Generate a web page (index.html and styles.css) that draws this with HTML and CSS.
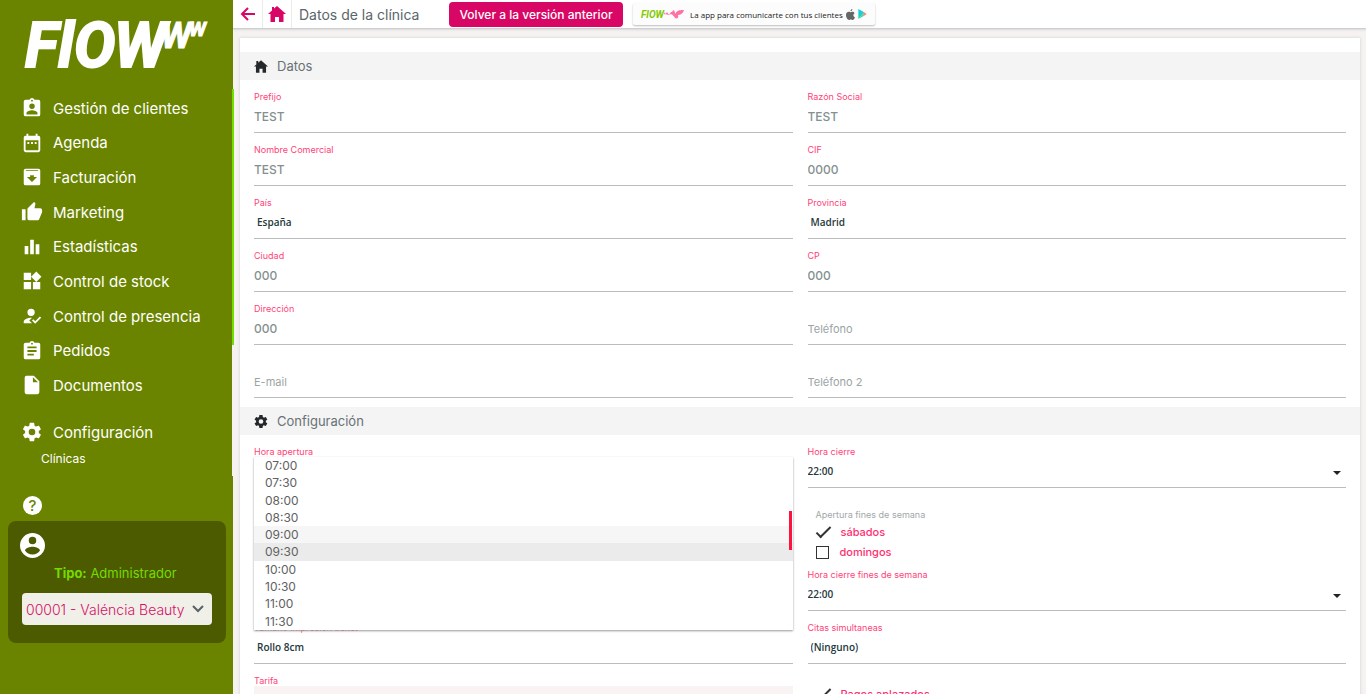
FILE: index.html
```html
<!DOCTYPE html>
<html lang="es">
<head>
    <meta charset="UTF-8">
    <meta name="viewport" content="width=device-width, initial-scale=1.0">
    <title>Datos de la clínica</title>
    <link rel="stylesheet" href="styles.css">
</head>
<body>
    <aside class="sidebar">
        <svg class="logo" viewBox="0 0 190 56" role="img" aria-label="Flowww">
            <text class="logo-text" x="3" y="50" font-size="62">FlO</text>
            <text class="logo-text" x="92" y="50" font-size="62">W</text>
            <text class="logo-text logo-medium" x="139" y="31" font-size="36">W</text>
            <text class="logo-text logo-small" x="167" y="19" font-size="20">W</text>
        </svg>

        <nav>
            <ul class="menu">
                <li><a href="#"><svg viewBox="0 0 24 24"><path d="M19 3h-4.200a3 3 0 0 0-5.600 0H5a2 2 0 0 0-2 2v14a2 2 0 0 0 2 2h14a2 2 0 0 0 2-2V5a2 2 0 0 0-2-2zm-7 0a1 1 0 1 1 0 2 1 1 0 0 1 0-2zm0 4a3 3 0 1 1 0 6 3 3 0 0 1 0-6zm6 12H6v-1.400c0-2 4-3.100 6-3.100s6 1.100 6 3.100z"/></svg>Gestión de clientes</a></li>
                <li><a href="#"><svg viewBox="0 0 24 24"><path d="M9 11H7v2h2zm4 0h-2v2h2zm4 0h-2v2h2zm2-7h-1V2h-2v2H8V2H6v2H5a2 2 0 0 0-2 2v14a2 2 0 0 0 2 2h14a2 2 0 0 0 2-2V6a2 2 0 0 0-2-2zm0 16H5V9h14z"/></svg>Agenda</a></li>
                <li><a href="#"><svg viewBox="0 0 24 24"><path d="M19 3H5a2 2 0 0 0-2 2v14a2 2 0 0 0 2 2h14a2 2 0 0 0 2-2V5a2 2 0 0 0-2-2zm-7 14.500L6.500 12H10v-2h4v2h3.500zM5 5.500l.5-.8h13l.5.8z"/></svg>Facturación</a></li>
                <li><a href="#"><svg viewBox="0 0 24 24"><path d="M1 21h4V9H1zm22-11a2 2 0 0 0-2-2h-6.300l1-4.600v-.3c0-.4-.2-.8-.4-1.100L14.200 1 7.600 7.600C7.200 8 7 8.500 7 9v10a2 2 0 0 0 2 2h9c.8 0 1.500-.5 1.800-1.200l3-7.100c.1-.2.2-.5.2-.7z"/></svg>Marketing</a></li>
                <li><a href="#"><svg viewBox="0 0 24 24"><path d="M4 11h4v9H4zm6-7h4v16h-4zm6 5h4v11h-4z"/></svg>Estadísticas</a></li>
                <li><a href="#"><svg viewBox="0 0 24 24"><path d="M13 13v8h8v-8zM3 21h8v-8H3zM3 3v8h8V3zm13.700-1.300L11 7.300l5.700 5.700 5.600-5.700z"/></svg>Control de stock</a></li>
                <li><a href="#"><svg viewBox="0 0 24 24"><path d="M11 12a4 4 0 1 0 0-8 4 4 0 0 0 0 8zm-8 6v2h9l-3-3 3-3-1-.1c-2.700 0-8 1.400-8 4.100zm12.500 2.500L12 17l1.400-1.400 2.100 2.100 5.100-5.200L22 14z"/></svg>Control de presencia</a></li>
                <li><a href="#"><svg viewBox="0 0 24 24"><path d="M19 3h-4.200a3 3 0 0 0-5.600 0H5a2 2 0 0 0-2 2v14a2 2 0 0 0 2 2h14a2 2 0 0 0 2-2V5a2 2 0 0 0-2-2zm-7 0a1 1 0 1 1 0 2 1 1 0 0 1 0-2zm2 14H7v-2h7zm3-4H7v-2h10zm0-4H7V7h10z"/></svg>Pedidos</a></li>
                <li><a href="#"><svg viewBox="0 0 24 24"><path d="M6 2a2 2 0 0 0-2 2v16a2 2 0 0 0 2 2h12a2 2 0 0 0 2-2V8l-6-6zm7 7V3.500L18.500 9z"/></svg>Documentos</a></li>
            </ul>
            <a class="menu-config" href="#"><svg viewBox="0 0 24 24"><path d="M19.400 13a7 7 0 0 0 0-2l2.100-1.600c.2-.2.300-.4.100-.6l-2-3.500c-.1-.2-.4-.3-.6-.2l-2.500 1a7 7 0 0 0-1.700-1l-.4-2.600c0-.3-.2-.5-.5-.5h-4c-.2 0-.4.200-.5.500L9 5.100a8 8 0 0 0-1.700 1l-2.400-1c-.3-.1-.5 0-.7.200l-2 3.500c-.1.200 0 .4.200.6L4.500 11a8 8 0 0 0 0 2l-2.100 1.600c-.2.200-.3.400-.2.600l2 3.500c.2.200.4.300.7.200l2.400-1a7 7 0 0 0 1.700 1l.4 2.600c.1.300.3.500.5.500h4c.3 0 .5-.2.500-.5l.4-2.600a7 7 0 0 0 1.700-1l2.500 1c.2.100.5 0 .6-.2l2-3.500c.2-.2.100-.4-.1-.6zM12 15.600a3.600 3.600 0 1 1 0-7.200 3.600 3.600 0 0 1 0 7.200z"/></svg>Configuración</a>
            <a class="submenu" href="#">Clínicas</a>
        </nav>

        <button class="help" aria-label="Ayuda">?</button>

        <div class="user-box">
            <svg class="avatar" viewBox="2 2 20 20"><path d="M12 2a10 10 0 1 0 0 20 10 10 0 0 0 0-20zm0 3a3 3 0 1 1 0 6 3 3 0 0 1 0-6zm0 14.200a7.200 7.200 0 0 1-6-3.200c0-2 4-3.100 6-3.100s6 1.100 6 3.100a7.200 7.200 0 0 1-6 3.200z"/></svg>
            <p class="user-type"><b>Tipo:</b> Administrador</p>
            <div class="clinic">
                <select aria-label="Clínica">
                    <option>00001 - Valéncia Beauty</option>
                </select>
                <svg viewBox="0 0 12 8"><path d="M1 1l5 5 5-5"/></svg>
            </div>
        </div>
        <div class="sidebar-scroll"></div>
    </aside>

    <main>
        <header class="topbar">
            <a class="topbar-icon" href="#" aria-label="Volver"><svg viewBox="0 0 16 16"><path class="arrow" d="M15 8H2M8 2L2 8l6 6"/></svg></a>
            <a class="topbar-icon home" href="#" aria-label="Inicio"><svg viewBox="0 0 18 16"><path d="M9 0l9 8h-2.500v8h-4.500v-5H7v5H2.500V8H0l4-3.600V1h2v1.600z"/></svg></a>
            <h1>Datos de la clínica</h1>
            <button class="btn-previous">Volver a la versión anterior</button>
            <a class="app-banner" href="#">
                <svg class="app-logo" viewBox="0 0 44 14">
                    <text x="0" y="11" font-size="10">FlOW</text>
                    <path d="M22 4l2 4 2-3 2 3 2-3 1 0c2-4 3 0 3 2 2-5 8-4 9-4-1 4-4 5-6 5 1 3-1 4-3 3-1-2-2-3-4-4-2 2-5 1-8-3z"/>
                </svg>
                <span>La app para comunicarte con tus clientes</span>
                <svg class="apple" viewBox="0 0 20 24"><path d="M14 0c0 3-2 5-4 5 0-3 2-5 4-5zM10 7c1 0 2-1 4-1 2 0 4 1 5 3-4 2-3 8 1 9-1 3-3 6-5 6-2 0-2-1-4-1s-3 1-4 1C3 24 0 18 0 13c0-7 6-8 10-6z"/></svg>
                <svg class="play" viewBox="0 0 10 12"><path fill="#18cfd8" d="M0 0l7 4-2 2-5 6z"/><path fill="#48d597" d="M0 12l5-6 2 2z"/><path fill="#f28a70" d="M7 4l3 2-3 2-2-2z"/></svg>
            </a>
        </header>

        <form class="panel">
            <h2><svg viewBox="0 0 18 16"><path d="M9 0l9 8h-2.500v8h-4.500v-5H7v5H2.500V8H0l3-2.700V1h2.500v2.100z"/></svg>Datos</h2>
            <div class="grid">
                <div class="field">
                    <label for="prefijo">Prefijo</label>
                    <input type="text" id="prefijo" value="TEST">
                </div>
                <div class="field">
                    <label for="razon">Razón Social</label>
                    <input type="text" id="razon" value="TEST">
                </div>
                <div class="field">
                    <label for="nombre">Nombre Comercial</label>
                    <input type="text" id="nombre" value="TEST">
                </div>
                <div class="field">
                    <label for="cif">CIF</label>
                    <input type="text" id="cif" value="0000">
                </div>
                <div class="field">
                    <label for="pais">País</label>
                    <select id="pais"><option>España</option></select>
                </div>
                <div class="field">
                    <label for="provincia">Provincia</label>
                    <select id="provincia"><option>Madrid</option></select>
                </div>
                <div class="field">
                    <label for="ciudad">Ciudad</label>
                    <input type="text" id="ciudad" value="000">
                </div>
                <div class="field">
                    <label for="cp">CP</label>
                    <input type="text" id="cp" value="000">
                </div>
                <div class="field">
                    <label for="direccion">Dirección</label>
                    <input type="text" id="direccion" value="000">
                </div>
                <div class="field empty">
                    <input type="tel" aria-label="Teléfono" placeholder="Teléfono">
                </div>
                <div class="field empty">
                    <input type="email" aria-label="E-mail" placeholder="E-mail">
                </div>
                <div class="field empty">
                    <input type="tel" aria-label="Teléfono 2" placeholder="Teléfono 2">
                </div>
            </div>

            <h2><svg viewBox="2 2 20 20"><path d="M19.400 13a7 7 0 0 0 0-2l2.100-1.600c.2-.2.300-.4.100-.6l-2-3.500c-.1-.2-.4-.3-.6-.2l-2.500 1a7 7 0 0 0-1.700-1l-.4-2.600c0-.3-.2-.5-.5-.5h-4c-.2 0-.4.200-.5.500L9 5.100a8 8 0 0 0-1.700 1l-2.400-1c-.3-.1-.5 0-.7.200l-2 3.500c-.1.200 0 .4.200.6L4.500 11a8 8 0 0 0 0 2l-2.100 1.600c-.2.200-.3.400-.2.600l2 3.500c.2.200.4.300.7.200l2.400-1a7 7 0 0 0 1.700 1l.4 2.600c.1.300.3.500.5.500h4c.3 0 .5-.2.500-.5l.4-2.600a7 7 0 0 0 1.700-1l2.500 1c.2.100.5 0 .6-.2l2-3.500c.2-.2.100-.4-.1-.6zM12 15.600a3.600 3.600 0 1 1 0-7.200 3.600 3.600 0 0 1 0 7.200z"/></svg>Configuración</h2>
            <div class="grid grid-config">
                <div class="field">
                    <label id="hora-apertura">Hora apertura</label>
                    <ul class="dropdown" role="listbox" aria-labelledby="hora-apertura">
                        <li role="option">07:00</li>
                        <li role="option">07:30</li>
                        <li role="option">08:00</li>
                        <li role="option">08:30</li>
                        <li role="option" class="selected">09:00</li>
                        <li role="option" class="hover">09:30</li>
                        <li role="option">10:00</li>
                        <li role="option">10:30</li>
                        <li role="option">11:00</li>
                        <li role="option">11:30</li>
                    </ul>
                </div>
                <div class="field arrow-down">
                    <label for="cierre">Hora cierre</label>
                    <select id="cierre"><option>22:00</option></select>
                </div>
                <fieldset class="checks">
                    <legend>Apertura fines de semana</legend>
                    <label><input type="checkbox" checked>sábados</label>
                    <label><input type="checkbox">domingos</label>
                </fieldset>
                <div class="field arrow-down right">
                    <label for="cierre-finde">Hora cierre fines de semana</label>
                    <select id="cierre-finde"><option>22:00</option></select>
                </div>
                <div class="field">
                    <label for="ticket">Tamaño impresión ticket</label>
                    <select id="ticket"><option>Rollo 8cm</option></select>
                </div>
                <div class="field">
                    <label for="citas">Citas simultaneas</label>
                    <select id="citas"><option>(Ninguno)</option></select>
                </div>
                <div class="field tarifa">
                    <label for="tarifa">Tarifa</label>
                    <select id="tarifa"></select>
                </div>
                <div class="checks checks-single">
                    <label><input type="checkbox" checked>Pagos aplazados</label>
                </div>
            </div>
        </form>
    </main>
</body>
</html>
```

FILE: styles.css
```css
* {
    box-sizing: border-box;
}

body {
    display: flex;
    height: 100vh;
    margin: 0;
    overflow: hidden;
    background-color: #f6f2f2;
    font-family: Inter, "Open Sans", sans-serif;
    font-size: 12px;
}

input, select, button {
    font-family: inherit;
}

/* Sidebar */
.sidebar {
    position: relative;
    flex: 0 0 233px;
    background-color: #6a8400;
    color: white;
}

.sidebar a {
    color: white;
    text-decoration: none;
}

.logo {
    display: block;
    width: 190px;
    height: 56px;
    margin: 17px 0 18px 22px;
    overflow: visible;
    fill: white;
}

.logo-text {
    font-family: "Liberation Sans Narrow", "Roboto", sans-serif;
    font-weight: bold;
    font-style: italic;
    stroke: white;
    stroke-width: 2px;
}

.logo-medium, .logo-small {
    stroke-width: 1px;
}

.menu {
    display: grid;
    grid-template-rows: repeat(9, 1fr);
    height: 312px;
    margin: 0 0 12px;
    padding: 0;
    list-style: none;
}

.menu a, .menu-config {
    display: flex;
    align-items: center;
    gap: 10px;
    height: 34px;
    padding-left: 21px;
    font-size: 15px;
}

.menu svg, .menu-config svg {
    width: 22px;
    height: 22px;
    fill: white;
    fill-rule: evenodd;
}

.submenu {
    display: block;
    padding-left: 41px;
    line-height: 20px;
}

.help {
    display: block;
    width: 19px;
    height: 19px;
    margin: 27px 0 6px 23px;
    padding: 0;
    border: none;
    border-radius: 50%;
    background-color: white;
    color: #6a8400;
    font-size: 15px;
    font-weight: 500;
    line-height: 19px;
}

.user-box {
    height: 122px;
    margin: 0 7px 0 8px;
    padding: 12px 14px;
    border-radius: 8px;
    background-color: #4c5a00;
}

.avatar {
    display: block;
    width: 25px;
    height: 25px;
    margin-left: -2px;
    fill: white;
}

.user-type {
    margin: 5px 0 10px 32px;
    color: #74dc00;
    font-size: 13px;
    line-height: 20px;
}

.clinic {
    display: flex;
    align-items: center;
    height: 32px;
    padding: 0 8px 0 4px;
    border-radius: 4px;
    background-color: #f0efe8;
}

.clinic select {
    flex: 1;
    min-width: 0;
    height: 28px;
    padding: 0;
    border: none;
    appearance: none;
    background: none;
    color: #d80d66;
    font-size: 14px;
    font-weight: 300;
}

.clinic svg {
    width: 12px;
    height: 8px;
    margin-left: 6px;
    fill: none;
    stroke: #596365;
    stroke-width: 2px;
}

.sidebar-scroll {
    position: absolute;
    top: 89px;
    right: -1px;
    width: 2px;
    height: 387px;
    background: linear-gradient(#70e000 256px, #f6f2f2 256px);
}

/* Top bar */
main {
    flex: 1;
    min-width: 0;
}

.topbar {
    display: flex;
    align-items: center;
    height: 29px;
    padding-left: 1px;
    border-bottom: 1px solid #cfcfcf;
    box-shadow: 0 1px 2px #d8d8d8;
    background-color: white;
}

.topbar-icon {
    display: flex;
    align-items: center;
    justify-content: center;
    width: 29px;
    height: 28px;
    border-right: 1px solid #ebebeb;
}

.topbar-icon svg {
    width: 16px;
    height: 16px;
    fill: #d80765;
}

.home svg {
    width: 18px;
}

.topbar-icon .arrow {
    fill: none;
    stroke: #d80765;
    stroke-width: 2px;
}

h1 {
    flex: 0 0 150px;
    margin: 0 0 0 7px;
    color: #59666a;
    font-size: 14px;
    font-weight: normal;
}

.btn-previous {
    width: 174px;
    height: 25px;
    padding: 0;
    border: none;
    border-radius: 4px;
    background-color: #d80765;
    color: white;
    font-size: 12px;
    font-weight: 500;
    white-space: nowrap;
}

.app-banner {
    display: flex;
    align-items: center;
    width: 242px;
    height: 22px;
    margin-left: 10px;
    padding: 0 8px;
    border-radius: 2px;
    box-shadow: 0 1px 2px #bbb;
    background-color: #fcfcfc;
    color: #222;
    font-family: "Open Sans", sans-serif;
    font-size: 8px;
    text-decoration: none;
    white-space: nowrap;
}

.app-logo {
    width: 44px;
    height: 14px;
    margin-right: 5px;
    fill: #83c900;
    font-family: "Liberation Sans Narrow", "Roboto", sans-serif;
    font-weight: bold;
    font-style: italic;
}

.app-logo path {
    fill: #ff70a4;
}

.apple {
    width: 9px;
    height: 11px;
    margin: 0 3px 0 auto;
    fill: #666;
}

.play {
    width: 9px;
    height: 10px;
}

/* Form */
.panel {
    margin: 9px 6px 0 7px;
    padding-top: 14px;
    box-shadow: 0 0 3px #ccc;
    background-color: white;
}

h2 {
    display: flex;
    align-items: center;
    gap: 9px;
    height: 28px;
    margin: 0;
    padding-left: 14px;
    background-color: #f4f4f4;
    color: #687174;
    font-size: 13px;
    font-weight: normal;
}

h2 svg {
    width: 14px;
    height: 13px;
    fill: #24282a;
}

.grid {
    display: grid;
    grid-template-columns: 1fr 1fr;
    grid-auto-rows: 53px;
    column-gap: 15px;
    margin-bottom: 9px;
    padding: 0 14px;
}

.grid-config {
    grid-template-rows: 53px 70px;
}

.field {
    position: relative;
    display: flex;
    flex-direction: column;
    gap: 4px;
    padding-top: 12px;
    border-bottom: 1px solid #bcbcbc;
}

.field label {
    color: #ff4379;
    font-size: 9px;
    line-height: 10px;
}

.field input, .field select {
    width: 100%;
    height: 20px;
    padding: 0;
    border: none;
    outline: none;
    appearance: none;
    background: none;
    color: #84908f;
    font-size: 12px;
    font-weight: 500;
}

.field select {
    padding-left: 3px;
    color: #24383b;
    font-family: "Open Sans", sans-serif;
    font-size: 10px;
    font-weight: 600;
}

.field.empty {
    padding-top: 26px;
}

.field input::placeholder {
    color: #9ba5a5;
    font-size: 11px;
    font-weight: normal;
    opacity: 1;
}

.right {
    grid-column: 2;
}

.arrow-down select {
    padding-left: 0;
}

.arrow-down::after {
    content: "";
    position: absolute;
    top: 36px;
    right: 5px;
    border: 4px solid transparent;
    border-top-color: #222;
    border-bottom: none;
}

.dropdown {
    position: absolute;
    top: 22px;
    left: 0;
    right: 0;
    z-index: 1;
    display: grid;
    grid-template-rows: repeat(10, 1fr);
    height: 173px;
    margin: 0;
    padding: 0;
    box-shadow: 0 1px 2px #999;
    background-color: white;
    color: #616161;
    font-size: 12px;
    line-height: 17px;
    list-style: none;
}

.dropdown::after {
    content: "";
    position: absolute;
    top: 54px;
    right: 1px;
    width: 3px;
    height: 39px;
    background-color: #ff123f;
}

.dropdown li {
    padding-left: 11px;
}

.dropdown .selected {
    background-color: #f6f6f6;
}

.dropdown .hover {
    background-color: #ebebeb;
}

.checks {
    grid-column: 2;
    margin: 0;
    padding: 22px 0 0 8px;
    border: none;
}

.checks legend {
    float: left;
    width: 100%;
    margin-bottom: 2px;
    padding: 0;
    color: #a0a8a8;
    font-size: 9px;
    line-height: 10px;
}

.checks label {
    display: flex;
    clear: both;
    align-items: center;
    gap: 10px;
    height: 20px;
    color: #ff2f70;
    font-size: 11px;
    font-weight: 500;
}

.checks input {
    width: 13px;
    height: 13px;
    margin: 0 1px 0 0;
    border: 1px solid #333;
    appearance: none;
}

.checks input:checked {
    width: 15px;
    height: 7px;
    margin: 0 0 4px;
    border-width: 0 0 2px 2px;
    transform: rotate(-45deg);
}

.checks-single {
    padding-top: 20px;
}

.tarifa {
    gap: 0;
}

.tarifa select {
    height: 30px;
    background-color: #faf3f3;
}
```
